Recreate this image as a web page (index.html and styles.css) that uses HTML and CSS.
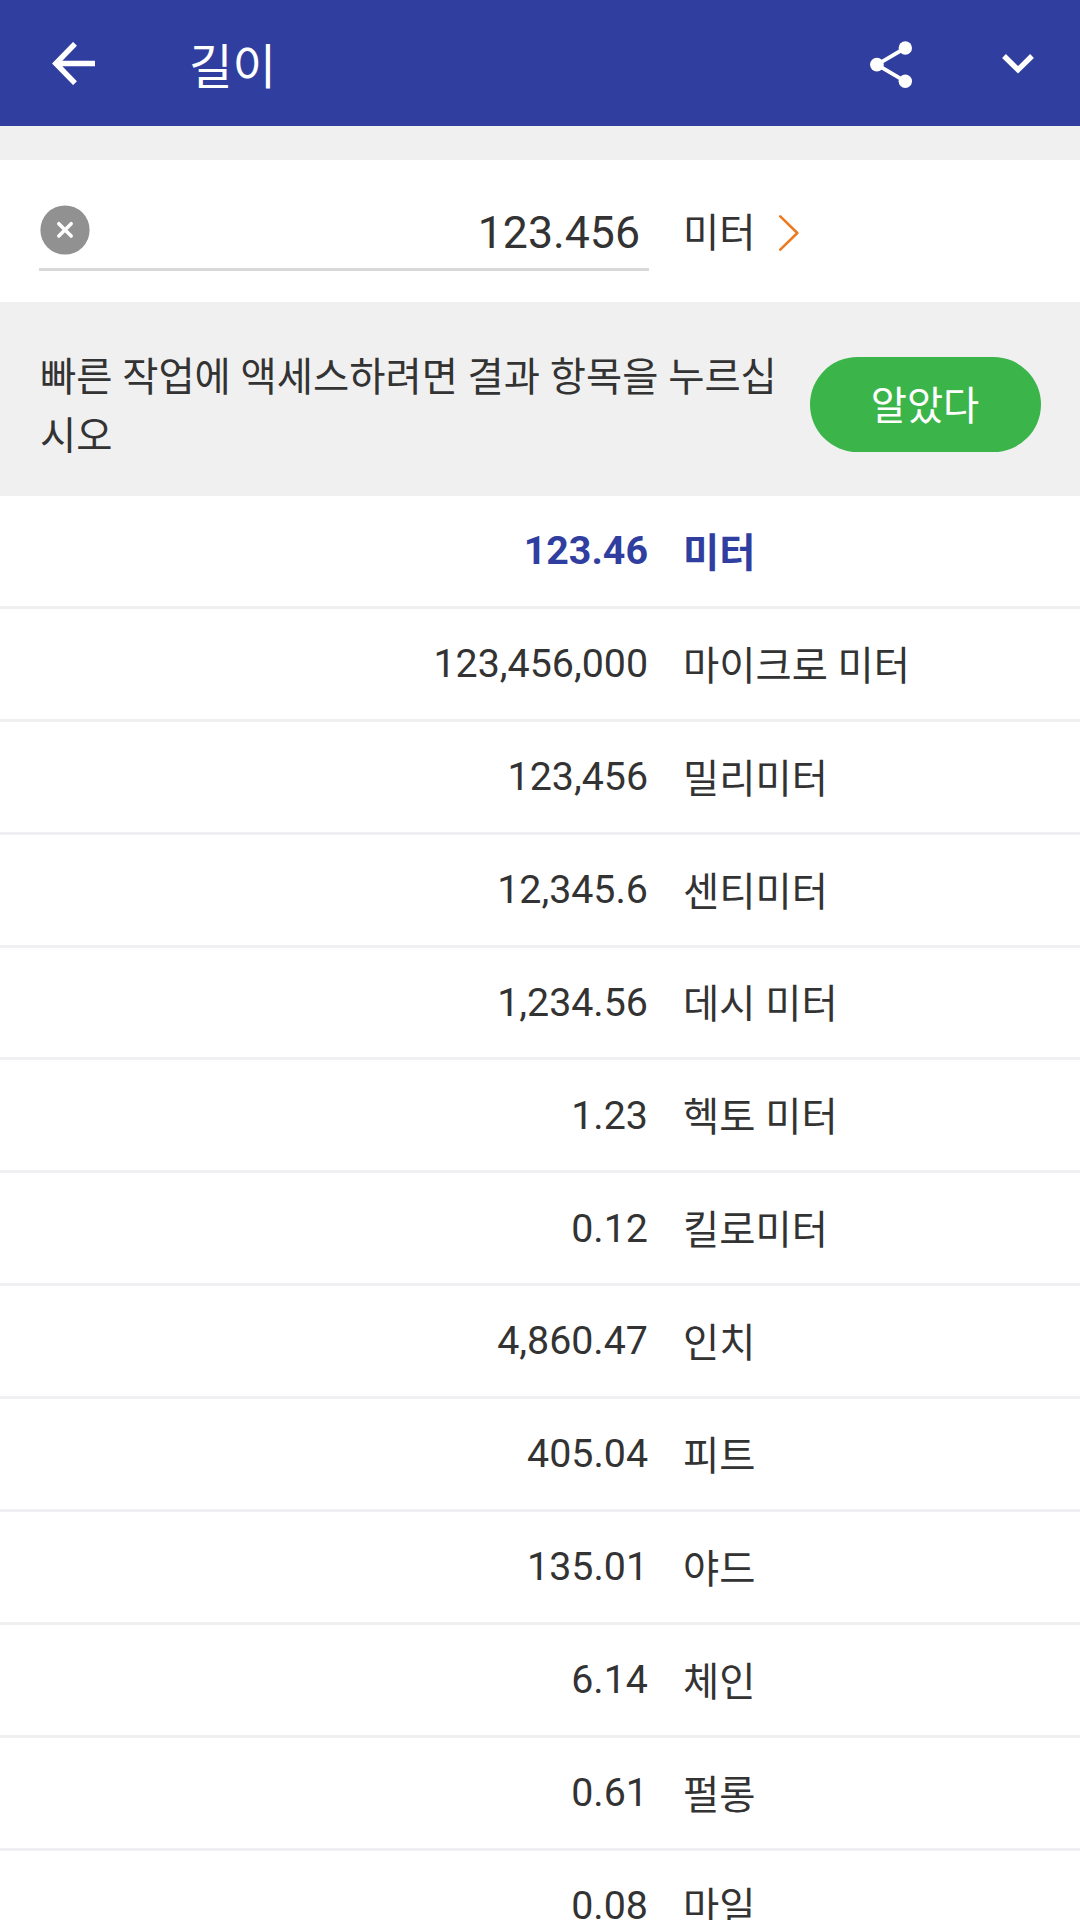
FILE: index.html
```html
<!DOCTYPE html>
<html lang="ko">
<head>
<meta charset="utf-8">
<title>길이</title>
<link rel="stylesheet" href="styles.css">
</head>
<body>
<div class="screen">
  <header class="appbar">
    <svg class="appbar-back" viewBox="0 0 43 43"><path d="M43 21.5H4M23 1.8L3.8 21.5L23 41.2" fill="none" stroke="#fff" stroke-width="5.4"/></svg>
    <h1 class="appbar-title">길이</h1>
    <svg class="appbar-share" viewBox="0 0 42 48"><path d="M35.3 7L7 23.7L35.3 40.3" fill="none" stroke="#fff" stroke-width="3.8"/><circle cx="35.3" cy="7" r="6.7" fill="#fff"/><circle cx="6.9" cy="23.6" r="6.9" fill="#fff"/><circle cx="35.3" cy="40.3" r="6.7" fill="#fff"/></svg>
    <svg class="appbar-more" viewBox="0 0 32 20"><path d="M2 2L16 15.8L30 2" fill="none" stroke="#fff" stroke-width="5.4"/></svg>
  </header>
  <section class="entry">
    <div class="entry-field">
      <svg class="entry-clear" viewBox="0 0 50 50"><circle cx="25" cy="25" r="24.6" fill="#919191"/><path d="M18.8 18.7L31.2 31.1M31.2 18.7L18.8 31.1" stroke="#fff" stroke-width="3.5" stroke-linecap="round"/></svg>
      <span class="entry-value">123.456</span>
    </div>
    <span class="entry-unit">미터</span>
    <svg class="entry-arrow" viewBox="0 0 20 36"><path d="M1.3 1.4L18.3 18L1.3 34.6" fill="none" stroke="#ec7a22" stroke-width="2.6" stroke-linecap="round" stroke-linejoin="round"/></svg>
  </section>
  <section class="hint">
    <p class="hint-text">빠른 작업에 액세스하려면 결과 항목을 누르십시오</p>
    <button class="hint-button">알았다</button>
  </section>
  <ul class="results">
    <li class="row row-active"><span class="value">123.46</span><span class="unit">미터</span></li>
    <li class="row"><span class="value">123,456,000</span><span class="unit">마이크로 미터</span></li>
    <li class="row"><span class="value">123,456</span><span class="unit">밀리미터</span></li>
    <li class="row"><span class="value">12,345.6</span><span class="unit">센티미터</span></li>
    <li class="row"><span class="value">1,234.56</span><span class="unit">데시 미터</span></li>
    <li class="row"><span class="value">1.23</span><span class="unit">헥토 미터</span></li>
    <li class="row"><span class="value">0.12</span><span class="unit">킬로미터</span></li>
    <li class="row"><span class="value">4,860.47</span><span class="unit">인치</span></li>
    <li class="row"><span class="value">405.04</span><span class="unit">피트</span></li>
    <li class="row"><span class="value">135.01</span><span class="unit">야드</span></li>
    <li class="row"><span class="value">6.14</span><span class="unit">체인</span></li>
    <li class="row"><span class="value">0.61</span><span class="unit">펄롱</span></li>
    <li class="row"><span class="value">0.08</span><span class="unit">마일</span></li>
  </ul>
</div>
</body>
</html>
```
FILE: styles.css
```css
* { box-sizing: border-box; margin: 0; padding: 0; }
body {
  font-family: Roboto, "Noto Sans CJK KR", sans-serif;
  font-size: 39.375px;
  color: #333;
  background: #fff;
}
.screen {
  width: 1080px;
  height: 1920px;
  overflow: hidden;
  background: #fff;
}
.appbar {
  display: flex;
  align-items: center;
  height: 126px;
  padding: 0 46px 0 52px;
  background: #303f9f;
  color: #fff;
}
.appbar-back { width: 43px; height: 43px; }
.appbar-title {
  flex: 1;
  margin-left: 94px;
  padding-top: 10px;
  font-size: 47.25px;
  line-height: 70px;
  font-weight: 400;
}
.appbar-share { width: 42px; height: 48px; margin-top: 3px; }
.appbar-more { width: 32px; height: 20px; margin-left: 90px; margin-top: 2px; }
.entry {
  display: flex;
  height: 176px;
  border-top: 34px solid #f0f0f0;
  padding-left: 39px;
}
.entry-field {
  display: flex;
  align-items: center;
  justify-content: space-between;
  width: 610px;
  height: 111px;
  padding: 38px 9px 0 1px;
  border-bottom: 3px solid #d8d8d8;
}
.entry-clear { width: 50px; height: 50px; margin-bottom: 7px; }
.entry-value { font-size: 44.625px; line-height: 60px; }
.entry-unit { margin-left: 34px; margin-top: 45px; line-height: 58px; }
.entry-arrow { width: 20px; height: 36px; margin: 55px 0 0 24px; }
.hint {
  display: flex;
  align-items: center;
  justify-content: space-between;
  height: 194px;
  padding: 0 39px 0 40px;
  background: #f0f0f0;
}
.hint-text {
  width: 740px;
  padding-top: 18px;
  line-height: 58.6px;
  word-break: break-all;
}
.hint-button {
  width: 231px;
  height: 95px;
  margin-top: 10px;
  padding: 0 1px 3px 0;
  border: 0;
  border-radius: 48px;
  background: #3bb54a;
  color: #fff;
  font: inherit;
}
.results { list-style: none; }
.row {
  display: grid;
  grid-template-columns: 648px 1fr;
  column-gap: 35px;
  align-items: center;
  height: 112.875px;
  border-bottom: 3px solid #f0f0f2;
  line-height: 58px;
}
.value { text-align: right; padding-top: 0.8px; }
.unit { padding-top: 6px; }
.row-active { color: #303f9f; font-weight: 700; }
```
